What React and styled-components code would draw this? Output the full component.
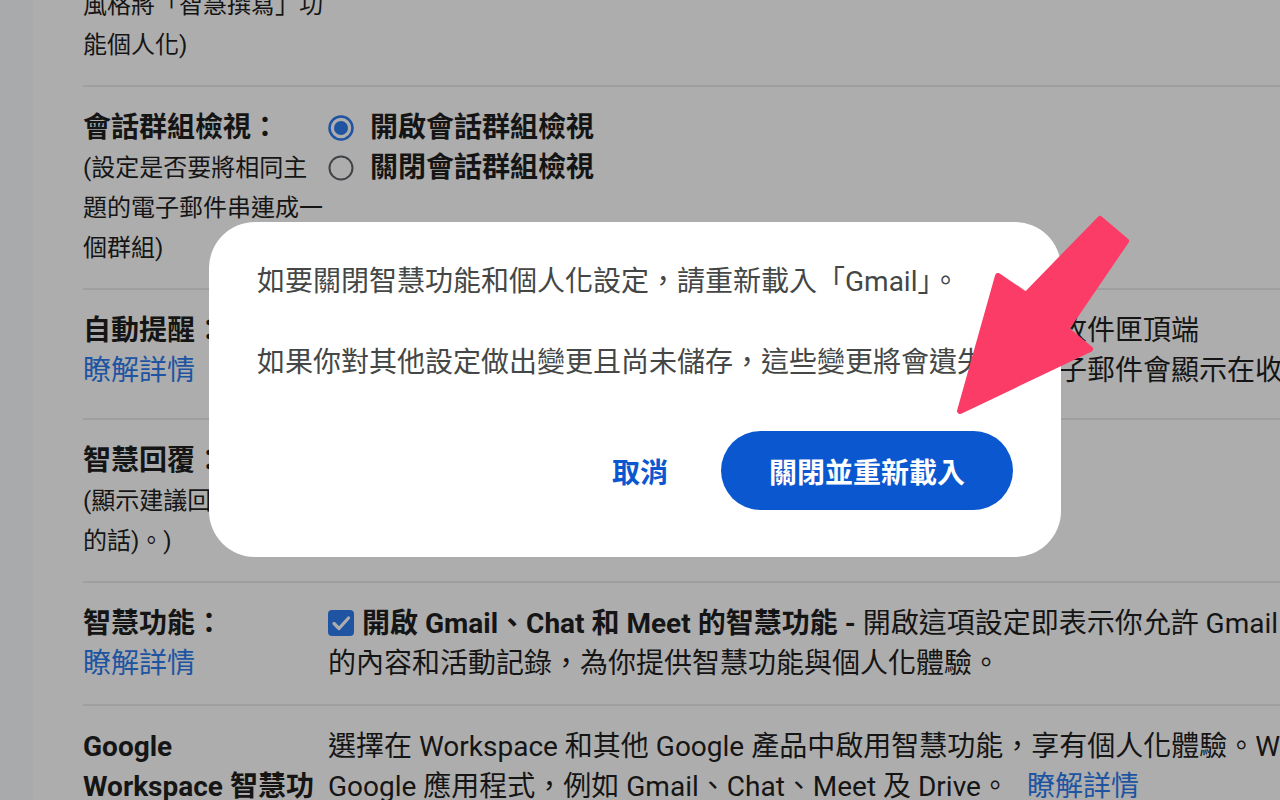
import React from "react";
import styled, { createGlobalStyle } from "styled-components";

const FONT = `Roboto, "Noto Sans CJK TC", sans-serif`;
const BLUE = "#2f7cf0";

const GlobalStyle = createGlobalStyle`
  html, body {
    margin: 0;
    padding: 0;
    overflow: hidden;
    background: #ffffff;
  }
  body {
    font-family: ${FONT};
    color: #1f1f1f;
  }
`;

const Screen = styled.div`
  position: relative;
  display: flex;
  width: 1280px;
  height: 800px;
  overflow: hidden;
  background: #f8fbfd;
`;

const Rail = styled.div`
  width: 33px;
  flex-shrink: 0;
  background: #f8fbfd;
`;

const Panel = styled.div`
  flex: 1;
  background: #ffffff;
  padding-left: 50px;
  overflow: hidden;
`;

const Settings = styled.div`
  width: 1700px;
  margin-top: -116px;
`;

const Row = styled.div`
  display: flex;
  padding: 21px 0 ${(p) => (p.$tall ? 27 : 20)}px;
  border-bottom: 2px solid #ebebeb;
`;

const Label = styled.div`
  width: 245px;
  flex-shrink: 0;
  font-size: 28px;
  line-height: 40px;
  font-weight: 700;
`;

const Desc = styled.div`
  font-size: 24px;
  line-height: 40px;
  font-weight: 400;
`;

const Link = styled.a`
  display: ${(p) => (p.$inline ? "inline" : "block")};
  margin-left: ${(p) => (p.$inline ? "18px" : "0")};
  color: ${BLUE};
  font-size: 28px;
  font-weight: 400;
  text-decoration: none;
`;

const Value = styled.div`
  flex: 1;
  font-size: 28px;
  line-height: 40px;
  white-space: nowrap;
`;

const Option = styled.div`
  display: flex;
  align-items: center;
  gap: 16px;
  font-weight: 700;
`;

const Line = styled.div``;

const Strong = styled.span`
  font-weight: 700;
`;

const Box = styled.svg`
  vertical-align: -3px;
  margin-right: 8px;
`;

const Scrim = styled.div`
  position: absolute;
  inset: 0;
  background: rgba(0, 0, 0, 0.32);
`;

const Dialog = styled.div`
  position: absolute;
  left: 209px;
  top: 222px;
  width: 852px;
  box-sizing: border-box;
  padding: 40px 48px 47px;
  background: #ffffff;
  border-radius: 46px;
`;

const Message = styled.p`
  margin: 0;
  font-size: 28px;
  line-height: 40px;
  color: #444746;
  white-space: nowrap;

  & + & {
    margin-top: 41px;
  }
`;

const Actions = styled.div`
  display: flex;
  justify-content: flex-end;
  gap: 29px;
  margin-top: 48px;
`;

const Button = styled.button`
  height: 79px;
  border: none;
  border-radius: 40px;
  padding: 0 ${(p) => (p.$primary ? 48 : 24)}px;
  font-family: ${FONT};
  font-size: 28px;
  font-weight: 700;
  background: ${(p) => (p.$primary ? "#0b57d0" : "transparent")};
  color: ${(p) => (p.$primary ? "#ffffff" : "#0b57d0")};
  cursor: pointer;
`;

const Arrow = styled.svg`
  position: absolute;
  left: 950px;
  top: 205px;
`;

function Radio({ checked }) {
  const color = checked ? BLUE : "#5f6368";
  return (
    <svg width="26" height="26" viewBox="0 0 26 26">
      <circle cx="13" cy="13" r="11.5" fill="none" stroke={color} strokeWidth={checked ? 2.5 : 2} />
      {checked && <circle cx="13" cy="13" r="7" fill={color} />}
    </svg>
  );
}

function Check() {
  return (
    <Box width="26" height="26" viewBox="0 0 26 26">
      <rect x="0" y="0" width="26" height="26" rx="4" fill={BLUE} />
      <path d="M6 13.5 L11 18.5 L20.5 8" fill="none" stroke="#fff" strokeWidth="3.2" strokeLinecap="round" strokeLinejoin="round" />
    </Box>
  );
}

export default function App() {
  return (
    <>
      <GlobalStyle />
      <Screen>
        <Rail />
        <Panel>
          <Settings>
            <Row>
              <Label>
                個人化設定：
                <Desc>(系統會根據你的寫作風格將「智慧撰寫」功能個人化)</Desc>
              </Label>
              <Value />
            </Row>

            <Row>
              <Label>
                會話群組檢視：
                <Desc>(設定是否要將相同主題的電子郵件串連成一個群組)</Desc>
              </Label>
              <Value>
                <Option><Radio checked />開啟會話群組檢視</Option>
                <Option><Radio />關閉會話群組檢視</Option>
              </Value>
            </Row>

            <Row $tall>
              <Label>
                自動提醒：
                <Link href="#">瞭解詳情</Link>
              </Label>
              <Value>
                <Line><Check /><Strong>建議要回覆的電子郵件 - </Strong>你可能忘記回覆的郵件會顯示在收件匣頂端</Line>
                <Line><Check /><Strong>建議要追蹤的電子郵件 - </Strong>你可能需要後續追蹤的已寄出電子郵件會顯示在收件匣頂端</Line>
              </Value>
            </Row>

            <Row>
              <Label>
                智慧回覆：
                <Desc>(顯示建議回覆 (如果有的話)。)</Desc>
              </Label>
              <Value>
                <Option><Radio checked />開啟智慧回覆</Option>
                <Option><Radio />關閉智慧回覆</Option>
              </Value>
            </Row>

            <Row>
              <Label>
                智慧功能：
                <Link href="#">瞭解詳情</Link>
              </Label>
              <Value>
                <Check /><Strong>開啟 Gmail、Chat 和 Meet 的智慧功能 - </Strong>開啟這項設定即表示你允許 Gmail、Chat 和 Meet 使用你
                <br />
                的內容和活動記錄，為你提供智慧功能與個人化體驗。
              </Value>
            </Row>

            <Row>
              <Label>
                Google
                <br />
                Workspace 智慧功能：
              </Label>
              <Value>
                選擇在 Workspace 和其他 Google 產品中啟用智慧功能，享有個人化體驗。Workspace 產品包括企業和學校使用的
                <br />
                Google 應用程式，例如 Gmail、Chat、Meet 及 Drive。<Link $inline href="#">瞭解詳情</Link>
              </Value>
            </Row>
          </Settings>
        </Panel>

        <Scrim>
          <Dialog role="dialog">
            <Message>如要關閉智慧功能和個人化設定，請重新載入「Gmail」。</Message>
            <Message>如果你對其他設定做出變更且尚未儲存，這些變更將會遺失。</Message>
            <Actions>
              <Button>取消</Button>
              <Button $primary>關閉並重新載入</Button>
            </Actions>
          </Dialog>
        </Scrim>

        <Arrow width="200" height="220" viewBox="0 0 200 220">
          <polygon
            points="150,14 176,36 116,124 140,144 10,206 48,71 76,90"
            fill="#fa3c66"
            stroke="#fa3c66"
            strokeWidth="6"
            strokeLinejoin="round"
          />
        </Arrow>
      </Screen>
    </>
  );
}
